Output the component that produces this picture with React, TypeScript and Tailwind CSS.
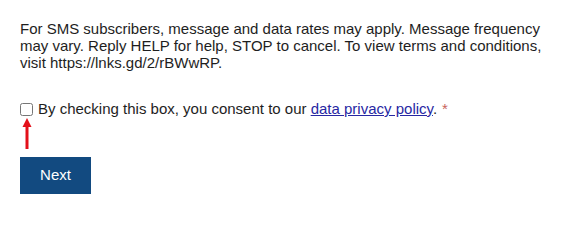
export default function App() {
  return (
    <div className="min-h-[215px] bg-white px-5 pt-5 font-['Liberation_Sans',Arial,sans-serif] text-[15px] text-[#1e1e1e]">
      <p className="w-[525px] leading-[17px]">
        For SMS subscribers, message and data rates may apply. Message frequency may vary. Reply HELP for help, STOP to
        cancel. To view terms and conditions, visit https://lnks.gd/2/rBWwRP.
      </p>

      <label className="mt-[29px] flex h-[18px] items-center leading-[18px]">
        <input type="checkbox" className="m-0 h-[13px] w-[13px]" />
        <span className="ml-[5px]">
          By checking this box, you consent to our{" "}
          <a href="#" className="text-[#2727a3] underline">
            data privacy policy
          </a>
          .<span className="ml-[5px] text-[#c8645a]">*</span>
        </span>
      </label>

      <svg width="12" height="32" viewBox="0 0 12 32" className="ml-px block">
        <polygon points="6,0 10.5,9 1.5,9" fill="#e3101a" />
        <rect x="4.5" y="8" width="3" height="23" fill="#e3101a" />
      </svg>

      <button
        type="button"
        className="mt-[7px] h-[37px] w-[71px] bg-[#124a80] text-[15px] text-white"
      >
        Next
      </button>
    </div>
  );
}
